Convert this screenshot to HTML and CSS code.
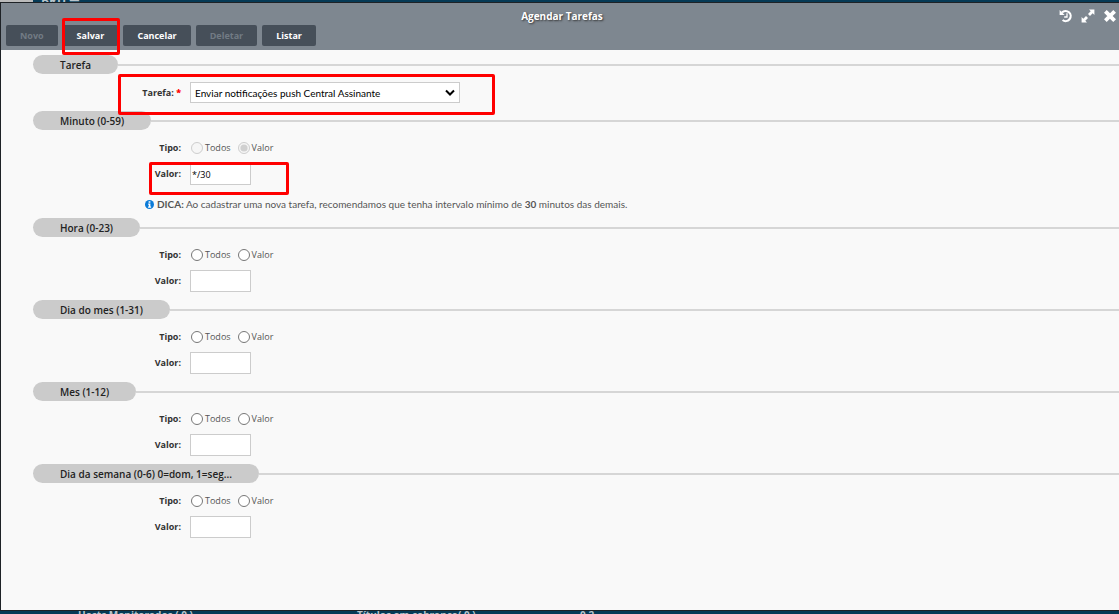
FILE: index.html
```html
<!DOCTYPE html>
<html lang="pt-BR">
<head>
<meta charset="utf-8">
<title>Agendar Tarefas</title>
<link rel="stylesheet" href="styles.css">
</head>
<body>
<div class="backdrop backdrop-top"><span class="tab"></span><span class="brand">BRU ☰</span></div>
<main class="dialog">
  <header class="titlebar">
    <h1 class="title">Agendar Tarefas</h1>
    <div class="window-tools">
      <button class="tool" aria-label="Histórico"><svg viewBox="0 0 14 14" width="14" height="14"><path d="M3 3.600A5 5 0 1 1 3.600 11" fill="none" stroke="#fff" stroke-width="2.200"/><path d="M.6 1v5h5z" fill="#fff"/><path d="M8 4.300v3.700H5.200" fill="none" stroke="#fff" stroke-width="1.300"/></svg></button>
      <button class="tool" aria-label="Maximizar"><svg viewBox="0 0 14 14" width="14" height="14"><path d="M8 .6h5.400V6l-1.700-1.700-2.700 2.700-2-2 2.700-2.700zM6 13.400H.6V8l1.700 1.700L5 7l2 2-2.700 2.700z" fill="#fff"/></svg></button>
      <button class="tool" aria-label="Fechar"><svg viewBox="0 0 14 14" width="14" height="14"><path d="M3.700 3.700l6.600 6.600M10.300 3.700l-6.600 6.600" stroke="#fff" stroke-width="3.800" stroke-linecap="square"/></svg></button>
    </div>
    <div class="toolbar">
      <button class="btn" disabled>Novo</button>
      <button class="btn marked">Salvar</button>
      <button class="btn">Cancelar</button>
      <button class="btn" disabled>Deletar</button>
      <button class="btn">Listar</button>
    </div>
  </header>
  <form class="form">
    <section class="group group-task">
      <h2 class="legend"><span class="pill">Tarefa</span></h2>
      <div class="row">
        <label class="label" for="tarefa">Tarefa: <b class="required">*</b></label>
        <span class="select-wrap"><select id="tarefa" class="select"><option>Enviar notificações push Central Assinante</option></select><svg class="chevron" viewBox="0 0 10 7" width="10" height="7"><path d="M1 1.500l4 4 4-4" fill="none" stroke="#000" stroke-width="2"/></svg></span>
      </div>
      <span class="highlight highlight-task"></span>
    </section>
    <section class="group">
      <h2 class="legend"><span class="pill">Minuto (0-59)</span></h2>
      <div class="row type"><span class="label">Tipo:</span><label class="option"><input type="radio" name="minuto" disabled>Todos</label><label class="option"><input type="radio" name="minuto" checked disabled>Valor</label></div>
      <div class="row value"><label class="label" for="v1">Valor:</label><input id="v1" class="text" type="text" value="*/30"><span class="highlight highlight-value"></span></div>
      <p class="hint"><svg class="info" viewBox="0 0 10 10" width="9" height="9"><circle cx="5" cy="5" r="5" fill="#0b7bd8"/><path d="M4 1.500h2v1.500H4zM3.500 4H6v3.300h.8v1.200H3.400V7.300h.8V5.200h-.7z" fill="#fff"/></svg><span><b>DICA:</b> Ao cadastrar uma nova tarefa, recomendamos que tenha intervalo mínimo de <b>30</b> minutos das demais.</span></p>
    </section>
    <section class="group">
      <h2 class="legend"><span class="pill">Hora (0-23)</span></h2>
      <div class="row type"><span class="label">Tipo:</span><label class="option"><input type="radio" name="hora">Todos</label><label class="option"><input type="radio" name="hora">Valor</label></div>
      <div class="row value"><label class="label" for="v2">Valor:</label><input id="v2" class="text" type="text"></div>
    </section>
    <section class="group">
      <h2 class="legend"><span class="pill">Dia do mes (1-31)</span></h2>
      <div class="row type"><span class="label">Tipo:</span><label class="option"><input type="radio" name="dia">Todos</label><label class="option"><input type="radio" name="dia">Valor</label></div>
      <div class="row value"><label class="label" for="v3">Valor:</label><input id="v3" class="text" type="text"></div>
    </section>
    <section class="group">
      <h2 class="legend"><span class="pill">Mes (1-12)</span></h2>
      <div class="row type"><span class="label">Tipo:</span><label class="option"><input type="radio" name="mes">Todos</label><label class="option"><input type="radio" name="mes">Valor</label></div>
      <div class="row value"><label class="label" for="v4">Valor:</label><input id="v4" class="text" type="text"></div>
    </section>
    <section class="group">
      <h2 class="legend"><span class="pill">Dia da semana (0-6) 0=dom, 1=seg...</span></h2>
      <div class="row type"><span class="label">Tipo:</span><label class="option"><input type="radio" name="semana">Todos</label><label class="option"><input type="radio" name="semana">Valor</label></div>
      <div class="row value"><label class="label" for="v5">Valor:</label><input id="v5" class="text" type="text"></div>
    </section>
  </form>
</main>
<div class="backdrop backdrop-bottom"><span>Hosts Monitorados ( 0 )</span><span>Títulos em cobrança( 0 )</span><span>0.2</span></div>
</body>
</html>
```
FILE: styles.css
```css
* { box-sizing: border-box; }
body {
  margin: 0;
  min-height: 100vh;
  display: flex;
  flex-direction: column;
  background: #053a56;
  color: #333;
  font: 9px/12px "Open Sans", "Noto Sans", sans-serif;
}
button, input, select { font: inherit; }

.backdrop {
  display: flex;
  overflow: hidden;
  color: #b9c4cb;
  font-weight: 700;
}
.backdrop-top { height: 2px; align-items: center; gap: 8px; background: #053a56; }
.tab { width: 33px; height: 2px; background: #bbb; }
.brand { font-size: 12px; line-height: 2px; }
.backdrop-bottom {
  height: 3px;
  display: grid;
  grid-template-columns: 279px 223px 1fr;
  align-items: end;
  padding-left: 78px;
  font-size: 10px;
}
.backdrop-bottom span { line-height: 8px; }

.dialog {
  flex: 1;
  display: flex;
  flex-direction: column;
  background: #f9f9f9;
  border: 1px solid #1e2226;
  border-right: 0;
}
.titlebar {
  position: relative;
  padding: 6px 5px 4px;
  background: #7e8790;
}
.title {
  margin: 0 0 2px;
  padding-left: 4px;
  color: #fff;
  font-size: 10px;
  line-height: 14px;
  font-weight: 700;
  text-align: center;
  text-shadow: 1px 1px 2px #333;
}
.window-tools {
  position: absolute;
  top: 6px;
  right: 2px;
  display: flex;
  gap: 8px;
}
.tool { display: flex; padding: 0; border: 0; background: none; }
.toolbar { display: flex; gap: 5px; }
.btn {
  height: 21px;
  padding: 0 14px;
  border: 0;
  border-radius: 2px;
  background: #464f59;
  color: #fff;
  font-weight: 700;
}
.btn:disabled { color: #727b84; }
.marked { position: relative; }
.marked::after {
  content: "";
  position: absolute;
  inset: -7px -2px -9px -1px;
  border: 3px solid #f00;
  border-radius: 2px;
}
.highlight {
  position: absolute;
  border: 3px solid #f00;
  border-radius: 2px;
  pointer-events: none;
}
.highlight-task { left: 85px; top: 19px; width: 377px; height: 41px; z-index: 1; }
.highlight-value { left: 116px; top: -1px; width: 140px; height: 33px; }

.form { padding: 5px 0 5px 32px; }
.group { position: relative; padding-bottom: 8px; }
.legend {
  display: flex;
  align-items: center;
  margin: 0;
  font-size: 10px;
  line-height: 19px;
  font-weight: 600;
}
.legend::after { content: ""; flex: 1; height: 2px; background: #d6d6d6; }
.pill {
  height: 19px;
  padding: 1px 27px 0;
  border-radius: 10px;
  background: #cbcbcb;
  color: #222;
}
.row { position: relative; display: flex; align-items: center; }
.label {
  width: 148px;
  margin-right: 9px;
  text-align: right;
  font-weight: 700;
}
.required { color: #f00; }
.group-task .row { padding-top: 8px; }
.type { height: 20px; margin-top: 8px; }
.value { margin-top: 5px; }
.option { display: flex; align-items: center; color: #555; margin-right: 6px; }
.option input { width: 12px; height: 12px; margin: 0 2px 0 1px; }
.text {
  width: 61px;
  height: 22px;
  padding: 0 1px;
  border: 1px solid #ccc;
  background: #fff;
}
.select-wrap { position: relative; display: flex; }
.select {
  appearance: none;
  width: 270px;
  height: 21px;
  padding: 0 20px 0 4px;
  border: 1px solid #ccc;
  border-radius: 0;
  background: #fff;
  color: #000;
}
.select, .hint { font-family: Lato, "Open Sans", sans-serif; font-size: 10px; }
.chevron { position: absolute; right: 5px; top: 7px; pointer-events: none; }
.hint {
  display: flex;
  align-items: center;
  gap: 3px;
  margin: 13px 0 0 112px;
  color: #555;
}
```
